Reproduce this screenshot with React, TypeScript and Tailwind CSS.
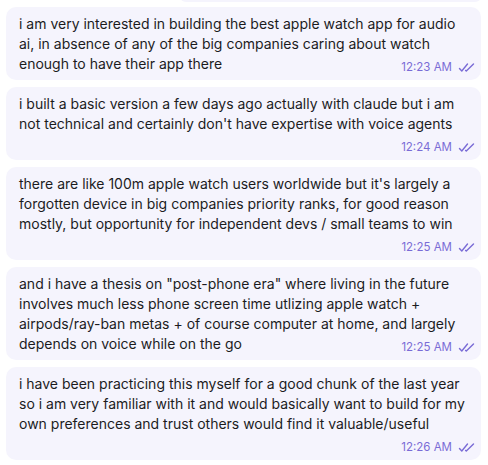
import React from "react";

const messages: { text: string; time: string }[] = [
  {
    text: "i am very interested in building the best apple watch app for audio ai, in absence of any of the big companies caring about watch enough to have their app there",
    time: "12:23 AM",
  },
  {
    text: "i built a basic version a few days ago actually with claude but i am not technical and certainly don't have expertise with voice agents",
    time: "12:24 AM",
  },
  {
    text: "there are like 100m apple watch users worldwide but it's largely a forgotten device in big companies priority ranks, for good reason mostly, but opportunity for independent devs / small teams to win",
    time: "12:25 AM",
  },
  {
    text: 'and i have a thesis on "post-phone era" where living in the future involves much less phone screen time utlizing apple watch + airpods/ray-ban metas + of course computer at home, and largely depends on voice while on the go',
    time: "12:25 AM",
  },
  {
    text: "i have been practicing this myself for a good chunk of the last year so i am very familiar with it and would basically want to build for my own preferences and trust others would find it valuable/useful",
    time: "12:26 AM",
  },
];

function DoubleCheck() {
  return (
    <svg width="17" height="11" viewBox="0 0 17 11" fill="none" className="inline-block ml-[6px]">
      <path d="M1.5 6.5 L3.8 9 L9.5 2" stroke="#7a6cd6" strokeWidth="1.4" strokeLinecap="round" strokeLinejoin="round" />
      <path d="M7.6 8.4 L8.3 9 L15.5 2" stroke="#7a6cd6" strokeWidth="1.4" strokeLinecap="round" strokeLinejoin="round" />
    </svg>
  );
}

export default function App() {
  return (
    <div className="w-[488px] h-[465px] bg-white overflow-hidden relative" style={{ fontFamily: "Inter, 'Noto Sans', sans-serif" }}>
      <div className="absolute left-[180px] right-[7px] top-[-10px] h-[12px] rounded-[10px] bg-[#f5f4fd]" />
      <div className="flex flex-col gap-[7px] pt-[7px] pl-[6px] pr-[7px]">
        {messages.map((m, i) => (
          <div key={i} className="flow-root rounded-[10px] bg-[#f5f4fd] pl-[13px] pr-[12px] pt-[7px] pb-[5px]">
            <div className="text-[14px] leading-[20px] text-[#1c1c1e]">
              {m.text}
              <span className="float-right mt-[5px] ml-[10px] mr-[-6px] h-[16px] flex items-center text-[11.5px] leading-[16px] text-[#7a6cd6] pl-[4px]">
                {m.time}
                <DoubleCheck />
              </span>
            </div>
          </div>
        ))}
      </div>
    </div>
  );
}
